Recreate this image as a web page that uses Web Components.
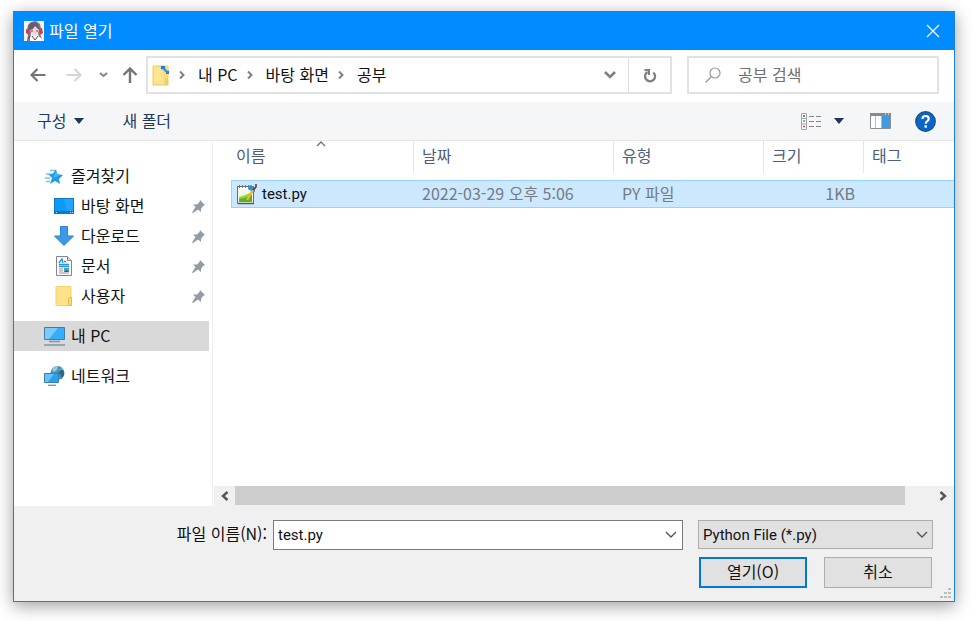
<!DOCTYPE html>
<html lang="ko">
<head>
<meta charset="utf-8">
<title>파일 열기</title>
<style>
html, body { margin: 0; }
body {
  box-sizing: border-box; min-height: 100vh; display: flex;
  padding: 11px 21px 19px 13px; background: #fff; color: #111;
  font: 16px/20px "Noto Sans CJK KR", sans-serif;
}
</style>
</head>
<body>
<file-dialog>
  <title-bar slot="title">파일 열기</title-bar>
  <address-bar slot="address"></address-bar>
  <command-bar slot="commands"></command-bar>
  <side-nav slot="nav">
    <nav-item icon="star">즐겨찾기</nav-item>
    <nav-item icon="desktop" nested pinned>바탕 화면</nav-item>
    <nav-item icon="download" nested pinned>다운로드</nav-item>
    <nav-item icon="document" nested pinned>문서</nav-item>
    <nav-item icon="folder" nested pinned>사용자</nav-item>
    <nav-item icon="pc" class="root" current>내 PC</nav-item>
    <nav-item icon="network" class="root">네트워크</nav-item>
  </side-nav>
  <file-list slot="files"></file-list>
  <dialog-footer slot="footer"></dialog-footer>
</file-dialog>
<script>
const ICONS = {
  avatar: [20, 20, `<rect width="20" height="20" fill="#f7f4f6"/><path d="M3 20L4 14 3 9 4 4 7 1 12 0 16 3 17 8 16 13 18 18 15 16 14 12H7L6 20Z" fill="#85738c"/><path d="M6 7l4-3 5 4-1 5-3 2-4-3Z" fill="#f3d5cf"/><path d="M4 9l1-6 5-2 4 2 2 6-2-1-3-3-2 3-3 1Z" fill="#6b5876"/><path d="M2 8l3 1v5l-3-2ZM15 8l3-1 1 5-3 2Z" fill="#c9414e"/><path d="M7 10h2M12 10h2" stroke="#6d465c"/><path d="M6 16l3-1 2 3 3-3 3 2v3H6Z" fill="#fff"/><path d="M8 15l3 4M14 15l-3 4M4 18l2-3" stroke="#484863"/>`],
  close: [14, 14, `<path d="M1 1l12 12M13 1L1 13" stroke="#fff" stroke-width="1.2"/>`],
  back: [16, 14, `<path d="M15.500 7H2M7.500 1L1.500 7 7.500 13" fill="none" stroke="#747474" stroke-width="2.200"/>`],
  forward: [16, 14, `<path d="M.5 7h13.500M8.500 1L14.500 7 8.500 13" fill="none" stroke="#d6d6d6" stroke-width="2.200"/>`],
  up: [16, 16, `<path d="M8 16V2M1.500 8L8 1.500 14.500 8" fill="none" stroke="#747474" stroke-width="2.400"/>`],
  smallDown: [9, 6, `<path d="M1 1l3.500 3L8 1" fill="none" stroke="#858585" stroke-width="2"/>`],
  down: [12, 8, `<path d="M1 1l5 5 5-5" fill="none" stroke="#808080" stroke-width="2.600"/>`],
  thinDown: [12, 8, `<path d="M1 1l5 5 5-5" fill="none" stroke="#555" stroke-width="1.400"/>`],
  crumb: [6, 8, `<path d="M1 0.500L4.500 4 1 7.500" fill="none" stroke="#808080" stroke-width="2"/>`],
  caret: [10, 6, `<path d="M0 0h10L5 6Z" fill="#1d3557"/>`],
  sort: [10, 6, `<path d="M1 5l4-4 4 4" fill="none" stroke="#707070" stroke-width="1.300"/>`],
  refresh: [14, 15, `<path d="M10.300 4.500A5 5 0 1 1 4.500 4" fill="none" stroke="#808080" stroke-width="2.300"/><path d="M1.500 2h4.500v5" fill="none" stroke="#808080" stroke-width="2.200"/>`],
  search: [16, 16, `<circle cx="10" cy="6" r="5" fill="none" stroke="#929ba5" stroke-width="1.200"/><path d="M6.500 9.500L0.500 15.500" stroke="#a69c9c" stroke-width="1.400"/>`],
  openFolder: [18, 21, `<path d="M1 1h15v19H1Z" fill="#fbdf7d" stroke="#f0cc5c"/><path d="M2 2h9v17H2Z" fill="#fee591"/><path d="M13 13h3v7h-3Z" fill="#f1cd63"/><path d="M8 1h6v3h3v5l-4-2-4-2Z" fill="#b8d8ea"/><path d="M9 1h4v3H9ZM14 6h3v3h-3Z" fill="#2479bc"/><path d="M11 3l5 5" stroke="#348ac5" stroke-width="2"/>`],
  view: [21, 17, `<path d="M.5.500h5v16h-5ZM.5 5.500h5M.5 11h5" fill="#fff" stroke="#a1a1a1"/><path d="M2 3h2" stroke="#555" stroke-width="1.500"/><path d="M2 8h2" stroke="#3796ec" stroke-width="1.500"/><path d="M2 13.500h2" stroke="#df4040" stroke-width="1.500"/><path d="M8 3.500h5M15 3.500h5M8 8.500h5M15 8.500h5M8 13.500h5M15 13.500h5" stroke="#858585" stroke-width="1.200"/>`],
  pane: [21, 16, `<path d="M.5.500h20v15H.5Z" fill="#fff" stroke="#8b8f93"/><path d="M0 0h21v3H0Z" fill="#858a8e"/><path d="M5.500 3v12M11.500 3v12" stroke="#bbb"/><path d="M12 3h8v12h-8Z" fill="#3f9ae0"/><path d="M15 1h1M18 1h1" stroke="#fff"/>`],
  help: [21, 21, `<circle cx="10.500" cy="10.500" r="9.800" fill="#0867c7" stroke="#184f85" stroke-width="1.200"/><path d="M7.500 8Q7.500 5 10.500 5 13.700 5 13.700 7.800 13.700 9.500 12 10.400 10.700 11.200 10.700 12.800" fill="none" stroke="#fff" stroke-width="2.200"/><rect x="9.500" y="14.300" width="2.400" height="2.400" fill="#fff"/>`],
  star: [20, 18, `<path d="M12 2l1 5 6 1-4 4 1 5-5-3-5 3 2-6-4-4 5-.5Z" fill="#219be3"/><path d="M6 3.500h5M2 7h4M1 11h5M2 14.500h4" stroke="#75c3ef" stroke-width="1.300"/><path d="M12 4l1 4h4L9 11Z" fill="#43b4f2"/>`],
  desktop: [20, 16, `<rect width="20" height="16" fill="#0879c9"/><path d="M1 1h18v12H1Z" fill="#0c9bfa"/><path d="M10 1h9v12h-6Z" fill="#1fa5fd"/><path d="M2 14.500h1M16 14.500h1M18 14.500h1" stroke="#b4e1ff"/>`],
  download: [20, 20, `<path d="M6.500.500h7V10h6L10 19.500.500 10h6Z" fill="#3c99e8" stroke="#2c82cc"/>`],
  document: [16, 20, `<path d="M.5.500h11l4 4v15H.5Z" fill="#fafafa" stroke="#858585"/><path d="M11.500.500v4h4" fill="#ddd" stroke="#858585"/><path d="M3 7l3-4 1 4M8 5.500h2M3 8.500h10M3 10.500h10" fill="none" stroke="#2793d8" stroke-width="1.300"/><path d="M3 13h4M3 15h4M3 17h10" stroke="#999"/><path d="M8 12h5v4H8Z" fill="#41a1c9"/><path d="M8 16l3-2 2 2Z" fill="#356c3e"/>`],
  folder: [18, 20, `<path d="M1 .5h15v19H1Z" fill="#ffe28a" stroke="#f3cf6c"/><path d="M13.500 13l1-1.500h2v8h-3Z" fill="#fbd96e" stroke="#e8bc49"/>`],
  pc: [21, 20, `<path d="M.5 1.500h20v12H.5Z" fill="#36adf8" stroke="#427ca3"/><path d="M1 2h13L5 13H1Z" fill="#79cbfb"/><path d="M5 15.500h11M0 19h21" stroke="#8195a8" stroke-width="1.300"/>`],
  network: [21, 20, `<circle cx="13.500" cy="7" r="7" fill="#4c92b8"/><path d="M8 4q2-4 6-4l-1 4-3 2ZM16 3l3-1 1 4-3 2-2-3Z" fill="#94cadd"/><path d="M14 7l3 2v4l3-4v-4l-3-2Z" fill="#2b678e"/><path d="M.5 7.500h14v9H.5Z" fill="#2aa0ee" stroke="#3b81ac"/><path d="M1 8h9l-6 8H1Z" fill="#63c4fb"/><path d="M4 19.300h8" stroke="#8397a8" stroke-width="1.400"/>`],
  pin: [13, 13, `<path d="M8 0l5 5-2 1-2 3v3L6 9.500 1 13l-1-.5L3.500 7 1 4.500h4L7.500 2Z" fill="#929ca3"/>`],
  script: [20, 21, `<path d="M.5 2.500h16v17H.5Z" fill="#f3f8ea" stroke="#686b6b"/><path d="M2 13Q7 12 15 8v10H2Z" fill="#9cd52c"/><path d="M2 15q7-1 13-4v7H2Z" fill="#55b51c"/><path d="M1 3h15v2H1Z" fill="#fff"/><path d="M2.500 1v3M5.500 1v3M8.500 1v3M11.500 1v3" stroke="#777"/><path d="M11 2l3-1 4 3v4l-4-1-3-2Z" fill="#358fcf"/><path d="M16 6l-6 10" stroke="#f2b42c" stroke-width="2.400"/><path d="M19 0v3l-3 3" fill="none" stroke="#8b2730" stroke-width="1.600"/><path d="M1 19.500h16" stroke="#595959" stroke-width="1.500"/>`],
  scrollLeft: [9, 10, `<path d="M7.500 1L3 5l4.500 4" fill="none" stroke="#555" stroke-width="2.400"/>`],
  scrollRight: [9, 10, `<path d="M1.500 1L6 5 1.500 9" fill="none" stroke="#555" stroke-width="2.400"/>`],
  grip: [11, 11, `<path d="M8 0h3v2H8ZM4 4h3v2H4ZM8 4h3v2H8ZM0 8h3v2H0ZM4 8h3v2H4ZM8 8h3v2H8Z" fill="#bdbdbd"/>`]
};

const BASE = `<style>
  *, :host { box-sizing: border-box; }
  button, input, select { font: inherit; color: inherit; margin: 0; padding: 0; border: 0; border-radius: 0; background: none; outline: 0; }
  button { display: flex; align-items: center; justify-content: center; white-space: nowrap; }
</style>`;

function define(name, markup, setup) {
  const template = document.createElement('template');
  template.innerHTML = BASE + markup;
  customElements.define(name, class extends HTMLElement {
    constructor() {
      super();
      this.attachShadow({ mode: 'open' }).append(template.content.cloneNode(true));
    }
    connectedCallback() { if (setup) setup(this, this.shadowRoot); }
  });
}

define('ui-icon', `<style>:host { display: inline-flex; flex: none; } svg { display: block; }</style><span></span>`, (host, root) => {
  const [w, h, art] = ICONS[host.getAttribute('name')];
  root.querySelector('span').innerHTML = `<svg width="${w}" height="${h}" viewBox="0 0 ${w} ${h}" aria-hidden="true">${art}</svg>`;
});

define('file-dialog', `<style>
  :host { flex: 1; min-width: 0; display: flex; flex-direction: column; background: #fff; border: 1px solid #1883d7;
    box-shadow: 0 4px 16px rgba(0,0,0,.38); }
  .body { flex: 1; display: flex; min-height: 0; }
</style>
<slot name="title"></slot><slot name="address"></slot><slot name="commands"></slot>
<div class="body"><slot name="nav"></slot><slot name="files"></slot></div>
<slot name="footer"></slot>`);

define('title-bar', `<style>
  :host { display: flex; align-items: center; gap: 5px; height: 38px; padding: 0 14px 0 10px; background: #008cff; color: #fff; }
  .text { flex: 1; padding-bottom: 3px; }
</style>
<ui-icon name="avatar"></ui-icon><span class="text"><slot></slot></span>
<button aria-label="닫기"><ui-icon name="close"></ui-icon></button>`);

define('address-bar', `<style>
  :host { display: flex; align-items: center; height: 52px; padding: 0 15px 2px 16px; gap: 15px; }
  .history { display: flex; gap: 20px; }
  .history button:nth-child(3) { margin: 0 -6px 0 -3px; }
  .path { flex: 1; min-width: 0; height: 38px; display: flex; border: 2px solid #e2e2e2; margin-left: -7px; }
  .crumbs { flex: 1; display: flex; align-items: center; gap: 9px; padding-left: 4px; }
  .crumbs button { padding: 0 0 3px 4px; }
  .crumbs button:first-child { padding: 0; }
  .drop { width: 36px; }
  .refresh { width: 42px; border-left: 1px solid #dedede; }
  .search { width: 252px; height: 38px; display: flex; align-items: center; gap: 17px; border: 2px solid #e2e2e2; padding: 0 16px; }
  input { flex: 1; min-width: 0; height: 30px; padding-bottom: 3px; }
  input::placeholder { color: #707070; opacity: 1; }
</style>
<div class="history">
  <button aria-label="뒤로"><ui-icon name="back"></ui-icon></button>
  <button aria-label="앞으로"><ui-icon name="forward"></ui-icon></button>
  <button aria-label="최근 위치"><ui-icon name="smallDown"></ui-icon></button>
  <button aria-label="위로"><ui-icon name="up"></ui-icon></button>
</div>
<div class="path">
  <div class="crumbs">
    <button aria-label="위치"><ui-icon name="openFolder"></ui-icon></button>
    <ui-icon name="crumb"></ui-icon><button>내 PC</button>
    <ui-icon name="crumb"></ui-icon><button>바탕 화면</button>
    <ui-icon name="crumb"></ui-icon><button>공부</button>
  </div>
  <button class="drop" aria-label="이전 위치"><ui-icon name="down"></ui-icon></button>
  <button class="refresh" aria-label="새로 고침"><ui-icon name="refresh"></ui-icon></button>
</div>
<div class="search"><ui-icon name="search"></ui-icon><input type="search" aria-label="공부 검색" placeholder="공부 검색"></div>`);

define('command-bar', `<style>
  :host { display: flex; align-items: center; height: 39px; padding: 0 18px 0 23px; background: #f5f6f8; border-bottom: 1px solid #e6e6e6; color: #1e395b; }
  button { gap: 8px; }
  .text { padding-bottom: 3px; }
  .new { margin-left: 38px; }
  .view { margin-left: auto; gap: 12px; }
  .pane { margin: 0 24px 0 26px; }
</style>
<button><span class="text">구성</span><ui-icon name="caret"></ui-icon></button>
<button class="new"><span class="text">새 폴더</span></button>
<button class="view" aria-label="보기 변경"><ui-icon name="view"></ui-icon><ui-icon name="caret"></ui-icon></button>
<button class="pane" aria-label="미리 보기 창"><ui-icon name="pane"></ui-icon></button>
<button aria-label="도움말"><ui-icon name="help"></ui-icon></button>`);

define('side-nav', `<style>
  :host { display: block; flex: none; width: 199px; padding: 20px 3px 0 0; border-right: 1px solid #f0f0f0; }
  ::slotted(.root) { margin-top: 10px; }
</style><nav><slot></slot></nav>`);

define('nav-item', `<style>
  :host { display: block; }
  a { display: flex; align-items: center; height: 30px; padding: 0 4px 0 29px; color: inherit; text-decoration: none; }
  .icon { width: 22px; display: flex; justify-content: center; margin-right: 6px; }
  .text { flex: 1; padding-bottom: 3px; }
  .pin { display: none; }
  :host([nested]) a { padding-left: 39px; }
  :host([pinned]) .pin { display: inline-flex; }
  :host([current]) a { background: #d9d9d9; }
</style>
<a href="#"><span class="icon"></span><span class="text"><slot></slot></span><ui-icon class="pin" name="pin"></ui-icon></a>`, (host, root) => {
  root.querySelector('.icon').innerHTML = `<ui-icon name="${host.getAttribute('icon')}"></ui-icon>`;
});

define('file-list', `<style>
  :host { flex: 1; min-width: 0; display: flex; flex-direction: column; }
  .area { flex: 1; padding-left: 18px; }
  table { width: 100%; table-layout: fixed; border-collapse: separate; border-spacing: 0; }
  .c1 { width: 183px; } .c2 { width: 200px; } .c3 { width: 150px; } .c4 { width: 100px; }
  th { position: relative; height: 32px; padding: 0 8px 4px; text-align: left; font-weight: 400; color: #4c607a; border-right: 1px solid #e5e5e5; }
  th:first-child { padding-left: 5px; }
  th:last-child { border-right: 0; }
  .sort { position: absolute; left: 50%; top: 0; margin-left: -6px; }
  .space td { height: 7px; padding: 0; border: 0; background: none; }
  td { height: 28px; padding: 0 8px 3px; color: #757b82; background: #cce8ff; border: 1px solid #99d1ff; border-width: 1px 0; white-space: nowrap; }
  td:first-child { padding: 0 0 0 5px; border-left-width: 1px; color: #111; font: 15px/20px Roboto, sans-serif; }
  .name { display: flex; align-items: center; gap: 5px; }
  .size { text-align: right; padding-right: 9px; }
  .scroll { display: flex; height: 20px; padding-bottom: 1px; margin-left: 1px; background: #f0f0f0; }
  .scroll button { width: 21px; }
  .track { flex: 1; display: flex; }
  .thumb { flex: 0 0 96%; background: #cdcdcd; }
</style>
<div class="area"><table>
  <colgroup><col class="c1"><col class="c2"><col class="c3"><col class="c4"><col></colgroup>
  <thead><tr><th>이름<ui-icon class="sort" name="sort"></ui-icon></th><th>날짜</th><th>유형</th><th>크기</th><th>태그</th></tr></thead>
  <tbody><tr class="space"><td colspan="5"></td></tr>
  <tr><td><span class="name"><ui-icon name="script"></ui-icon>test.py</span></td><td>2022-03-29 오후 5:06</td><td>PY 파일</td><td class="size">1KB</td><td></td></tr></tbody>
</table></div>
<div class="scroll"><button aria-label="왼쪽으로"><ui-icon name="scrollLeft"></ui-icon></button><div class="track"><div class="thumb"></div></div><button aria-label="오른쪽으로"><ui-icon name="scrollRight"></ui-icon></button></div>`);

define('dialog-footer', `<style>
  :host { position: relative; display: flex; flex-direction: column; gap: 7px; padding: 14px 21px 13px 0; background: #f0f0f0; }
  .row { display: flex; align-items: flex-start; }
  label { width: 259px; padding-right: 6px; text-align: right; line-height: 26px; }
  .combo { flex: 1; min-width: 0; height: 30px; display: flex; border: 1px solid #7a7a7a; background: #fff; }
  input { flex: 1; min-width: 0; padding-left: 4px; font: 15px/20px Roboto, sans-serif; }
  .combo button { width: 22px; }
  .type { width: 235px; margin-left: 15px; display: grid; align-items: center; }
  .type > * { grid-area: 1 / 1; }
  select { appearance: none; width: 100%; height: 29px; padding: 0 24px 0 4px; background: #e1e1e1; border: 1px solid #adadad; font: 15px/20px Roboto, sans-serif; }
  .type ui-icon { justify-self: end; margin-right: 5px; pointer-events: none; }
  .actions { justify-content: flex-end; gap: 17px; padding-right: 1px; }
  .actions button { width: 108px; height: 31px; padding-bottom: 3px; background: #e1e1e1; border: 1px solid #adadad; }
  .actions .primary { border: 2px solid #0078d7; }
  .grip { position: absolute; right: 3px; bottom: 2px; }
</style>
<div class="row"><label for="name">파일 이름(N):</label>
  <div class="combo"><input id="name" type="text" value="test.py"><button aria-label="파일 이름 목록"><ui-icon name="thinDown"></ui-icon></button></div>
  <div class="type"><select aria-label="파일 형식"><option>Python File (*.py)</option></select><ui-icon name="thinDown"></ui-icon></div></div>
<div class="row actions"><button class="primary">열기(O)</button><button>취소</button></div>
<ui-icon class="grip" name="grip"></ui-icon>`);
</script>
</body>
</html>
